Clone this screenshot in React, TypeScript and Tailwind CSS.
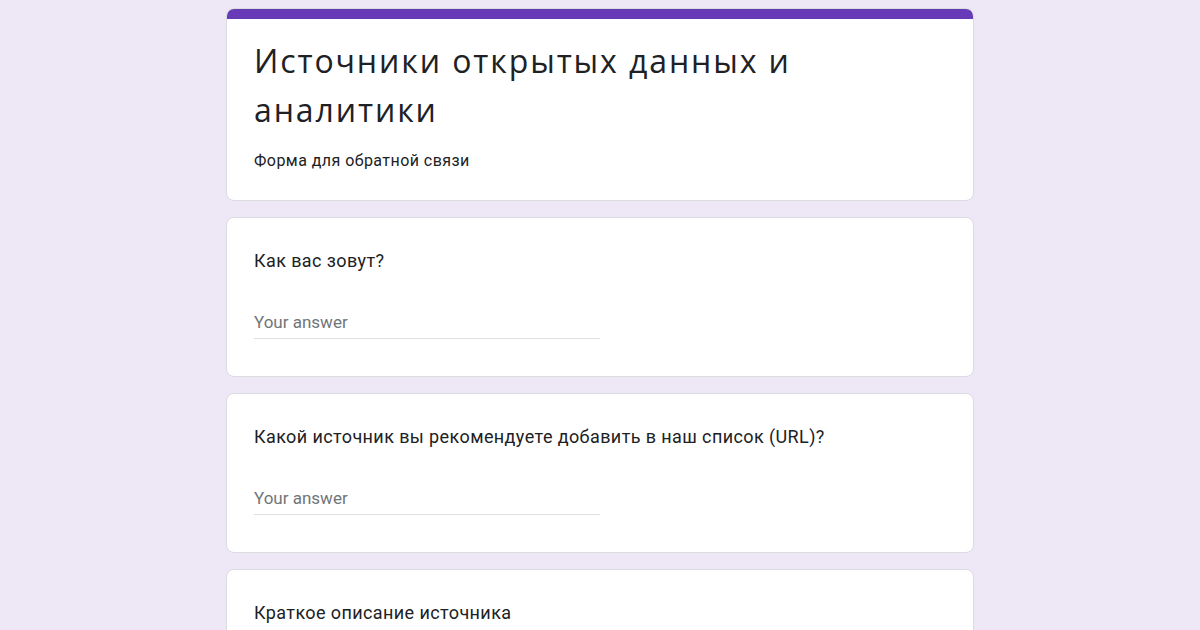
import React from "react";

function Question({ title, answer = true }: { title: string; answer?: boolean }) {
  return (
    <div className="w-[748px] shrink-0 bg-white border border-[#dadce0] rounded-[8px] px-[27px] pt-[31px] pb-[37px]">
      <div className="text-[18px] leading-[24px] tracking-[0.4px] text-[#202124]">{title}</div>
      {answer && (
        <div className="mt-[37px] w-[346px] h-[29px] border-b border-[#e0e0e0] text-[17px] leading-[24px] text-[#70757a]">
          Your answer
        </div>
      )}
    </div>
  );
}

export default function App() {
  return (
    <div
      className="w-[1200px] h-[630px] overflow-hidden bg-[#ede7f6] flex flex-col items-center gap-[16px] pt-[8px]"
      style={{ fontFamily: "Roboto, 'Noto Sans', sans-serif" }}
    >
      <div className="w-[748px] shrink-0 bg-white border border-[#dadce0] rounded-[8px] overflow-hidden">
        <div className="h-[10px] bg-[#673ab7]" />
        <div className="px-[27px] pt-[17px] pb-[27px]">
          <div
            className="text-[32px] leading-[49px] tracking-[1.9px] text-[#202124]"
            style={{ fontFamily: "'Open Sans', Roboto, sans-serif" }}
          >
            Источники открытых данных и<br />аналитики
          </div>
          <div className="mt-[15px] text-[16px] leading-[24px] tracking-[0.45px] text-[#202124]">
            Форма для обратной связи
          </div>
        </div>
      </div>
      <Question title="Как вас зовут?" />
      <Question title="Какой источник вы рекомендуете добавить в наш список (URL)?" />
      <Question title="Краткое описание источника" />
    </div>
  );
}
